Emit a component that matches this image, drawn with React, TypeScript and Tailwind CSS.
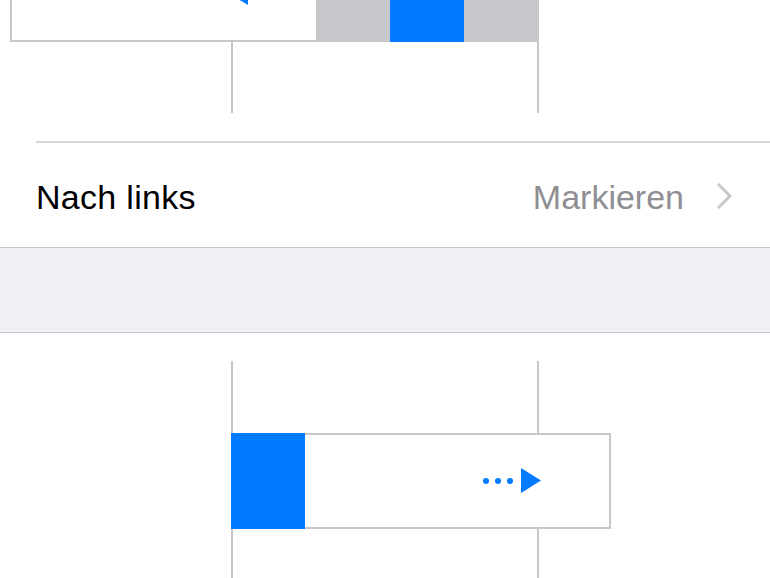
import React from 'react'

const font = { fontFamily: '"Liberation Sans", Arial, sans-serif' }

function LeftArrow() {
  return (
    <svg width="20" height="24" viewBox="0 0 20 24" className="absolute left-[216px] top-[-19px]">
      <polygon points="0,12 20,0 20,24" fill="#007aff" />
    </svg>
  )
}

function RightArrow() {
  return (
    <svg width="58" height="26" viewBox="0 0 58 26">
      <circle cx="3" cy="13" r="3" fill="#007aff" />
      <circle cx="15" cy="13" r="3" fill="#007aff" />
      <circle cx="27" cy="13" r="3" fill="#007aff" />
      <polygon points="38,0 58,12.5 38,25" fill="#007aff" />
    </svg>
  )
}

function Chevron() {
  return (
    <svg width="18" height="28" viewBox="0 0 18 28" fill="none">
      <path d="M3 2 L15 14 L3 26" stroke="#c7c7cc" strokeWidth="3" strokeLinecap="butt" strokeLinejoin="miter" />
    </svg>
  )
}

function Guides({ height }: { height: string }) {
  return (
    <div className="flex">
      <div className={`ml-[231px] w-[2px] bg-[#c8c7cc] ${height}`} />
      <div className={`ml-[304px] w-[2px] bg-[#c8c7cc] ${height}`} />
    </div>
  )
}

export default function App() {
  return (
    <div className="w-[770px] h-[578px] bg-white overflow-hidden" style={font}>
      {/* upper illustration: cell swiped to the left */}
      <div className="h-[141px]">
        <div className="ml-[10px] w-[529px] h-[42px] flex border-2 border-t-0 border-[#c8c7cc]">
          <div className="relative flex-1 bg-white">
            <LeftArrow />
          </div>
          <div className="w-[74px] bg-[#c8c7cc]" />
          <div className="w-[74px] bg-[#007aff] -mb-[2px]" />
          <div className="w-[73px] bg-[#c8c7cc]" />
        </div>
        <Guides height="h-[71px]" />
      </div>

      {/* settings row */}
      <div className="ml-[36px] h-[2px] bg-[#d9d9dd]" />
      <div className="h-[104px] flex items-center pl-[36px] pr-[37px] pt-[4px]">
        <span className="flex-1 text-[34px] tracking-[0.3px] text-black">Nach links</span>
        <span className="text-[34px] text-[#8e8e93]">Markieren</span>
        <span className="ml-[31px] flex items-center -mt-[2px]">
          <Chevron />
        </span>
      </div>
      <div className="h-[86px] bg-[#efeff4] border-y border-[#c8c7cc]" />

      {/* lower illustration: cell swiped to the right */}
      <div className="pt-[28px]">
        <Guides height="h-[72px]" />
        <div className="ml-[231px] w-[380px] h-[96px] flex">
          <div className="w-[74px] bg-[#007aff]" />
          <div className="flex-1 flex items-center justify-end pr-[68px] bg-white border-2 border-l-0 border-[#c8c7cc]">
            <RightArrow />
          </div>
        </div>
        <Guides height="h-[60px]" />
      </div>
    </div>
  )
}
